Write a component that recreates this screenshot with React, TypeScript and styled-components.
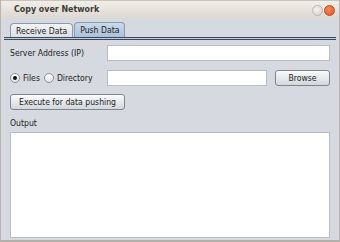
import styled, { createGlobalStyle } from 'styled-components'

const GlobalStyle = createGlobalStyle`
  html, body {
    margin: 0;
    padding: 0;
    background: #d6d9df;
  }
  * {
    box-sizing: border-box;
  }
`

const Window = styled.div`
  width: 340px;
  height: 242px;
  display: flex;
  flex-direction: column;
  background: #d6d9df;
  border-left: 1px solid #b9b5ae;
  border-right: 1px solid #b9b5ae;
  border-bottom: 2px solid #b3b0ab;
  font-family: 'DejaVu Sans Condensed', 'DejaVu Sans', sans-serif;
  font-size: 8.6px;
  color: #222;
`

const TitleBar = styled.div`
  height: 18px;
  display: flex;
  align-items: center;
  justify-content: space-between;
  padding: 0 4px 1px 13px;
  background: linear-gradient(#f1eee9, #ddd8d0);
  border-top: 1px solid #c9c4bc;
`

const Title = styled.span`
  font-weight: bold;
  font-size: 8.8px;
  color: #3c3b37;
`

const WinButtons = styled.div`
  display: flex;
  gap: 1px;
  margin-top: 2px;
`

const WinButton = styled.div<{ $close?: boolean }>`
  width: 11px;
  height: 11px;
  border-radius: 50%;
  background: ${p => (p.$close ? 'radial-gradient(circle at 40% 35%, #f38a5a, #df5320)' : 'radial-gradient(circle at 40% 35%, #f4f2ef, #d3cfc9)')};
  border: 1px solid ${p => (p.$close ? '#c24a1f' : '#bdb8b0')};
`

const Body = styled.div`
  flex: 1;
  display: flex;
  flex-direction: column;
  padding: 4px 3px 0 3px;
`

const TabBar = styled.div`
  display: flex;
  padding-left: 6px;
  gap: 1px;
  height: 15px;
  align-items: flex-end;
`

const Tab = styled.div<{ $active?: boolean }>`
  height: ${p => (p.$active ? '15px' : '14px')};
  padding: 0 5px;
  display: flex;
  align-items: center;
  border: 1px solid #8d9aa8;
  border-bottom: none;
  border-radius: 4px 4px 0 0;
  background: ${p => (p.$active ? 'linear-gradient(#c9d9ea, #a9c2dc)' : 'linear-gradient(#f2f3f5, #dcdfe4)')};
  color: #222;
`

const TabLine = styled.div`
  height: 3px;
  border-top: 1px solid #394a5e;
  border-bottom: 1px solid #394a5e;
  background: #c3ccd6;
`

const Form = styled.div`
  flex: 1;
  display: flex;
  flex-direction: column;
  padding: 5px 6px 2px 6px;
`

const Row = styled.div<{ $gap?: number }>`
  display: flex;
  align-items: center;
  height: 16px;
  margin-top: ${p => p.$gap ?? 0}px;
`

const Label = styled.span`
  width: 97px;
  flex-shrink: 0;
`

const Field = styled.div<{ $width?: number }>`
  height: 16px;
  width: ${p => (p.$width ? `${p.$width}px` : 'auto')};
  flex: ${p => (p.$width ? '0 0 auto' : '1')};
  background: #fff;
  border: 1px solid #b8bcc3;
`

const RadioGroup = styled.div`
  width: 97px;
  flex-shrink: 0;
  display: flex;
  align-items: center;
`

const RadioItem = styled.label`
  display: flex;
  align-items: center;
  gap: 3px;
  margin-right: 4px;
`

const RadioCircle = styled.span<{ $checked?: boolean }>`
  width: 10px;
  height: 10px;
  border-radius: 50%;
  border: 1px solid #8a9099;
  background: linear-gradient(#fdfdfd, #e4e6ea);
  display: flex;
  align-items: center;
  justify-content: center;
  &::after {
    content: '';
    width: 4px;
    height: 4px;
    border-radius: 50%;
    background: ${p => (p.$checked ? '#111' : 'transparent')};
  }
`

const Spacer = styled.span`
  width: 8px;
  flex-shrink: 0;
`

const Button = styled.div<{ $width?: number }>`
  height: 16px;
  width: ${p => (p.$width ? `${p.$width}px` : 'auto')};
  padding: 0 8px;
  display: flex;
  align-items: center;
  justify-content: center;
  border: 1px solid #7f858e;
  border-radius: 3px;
  background: linear-gradient(#fbfbfc, #e3e5e9 60%, #d3d6dc);
  color: #222;
`

const OutputLabel = styled.div`
  margin-top: 7px;
  height: 12px;
  line-height: 12px;
`

const OutputArea = styled.div`
  flex: 1;
  margin-top: 3px;
  background: #fff;
  border: 1px solid #b8bcc3;
`

export default function App() {
  return (
    <>
      <GlobalStyle />
      <Window>
        <TitleBar>
          <Title>Copy over Network</Title>
          <WinButtons>
            <WinButton />
            <WinButton $close />
          </WinButtons>
        </TitleBar>
        <Body>
          <TabBar>
            <Tab>Receive Data</Tab>
            <Tab $active>Push Data</Tab>
          </TabBar>
          <TabLine />
          <Form>
            <Row>
              <Label>Server Address (IP)</Label>
              <Field />
            </Row>
            <Row $gap={9}>
              <RadioGroup>
                <RadioItem>
                  <RadioCircle $checked />
                  Files
                </RadioItem>
                <RadioItem>
                  <RadioCircle />
                  Directory
                </RadioItem>
              </RadioGroup>
              <Field $width={160} />
              <Spacer />
              <Button $width={57}>Browse</Button>
            </Row>
            <Row $gap={8}>
              <Button>Execute for data pushing</Button>
            </Row>
            <OutputLabel>Output</OutputLabel>
            <OutputArea />
          </Form>
        </Body>
      </Window>
    </>
  )
}
